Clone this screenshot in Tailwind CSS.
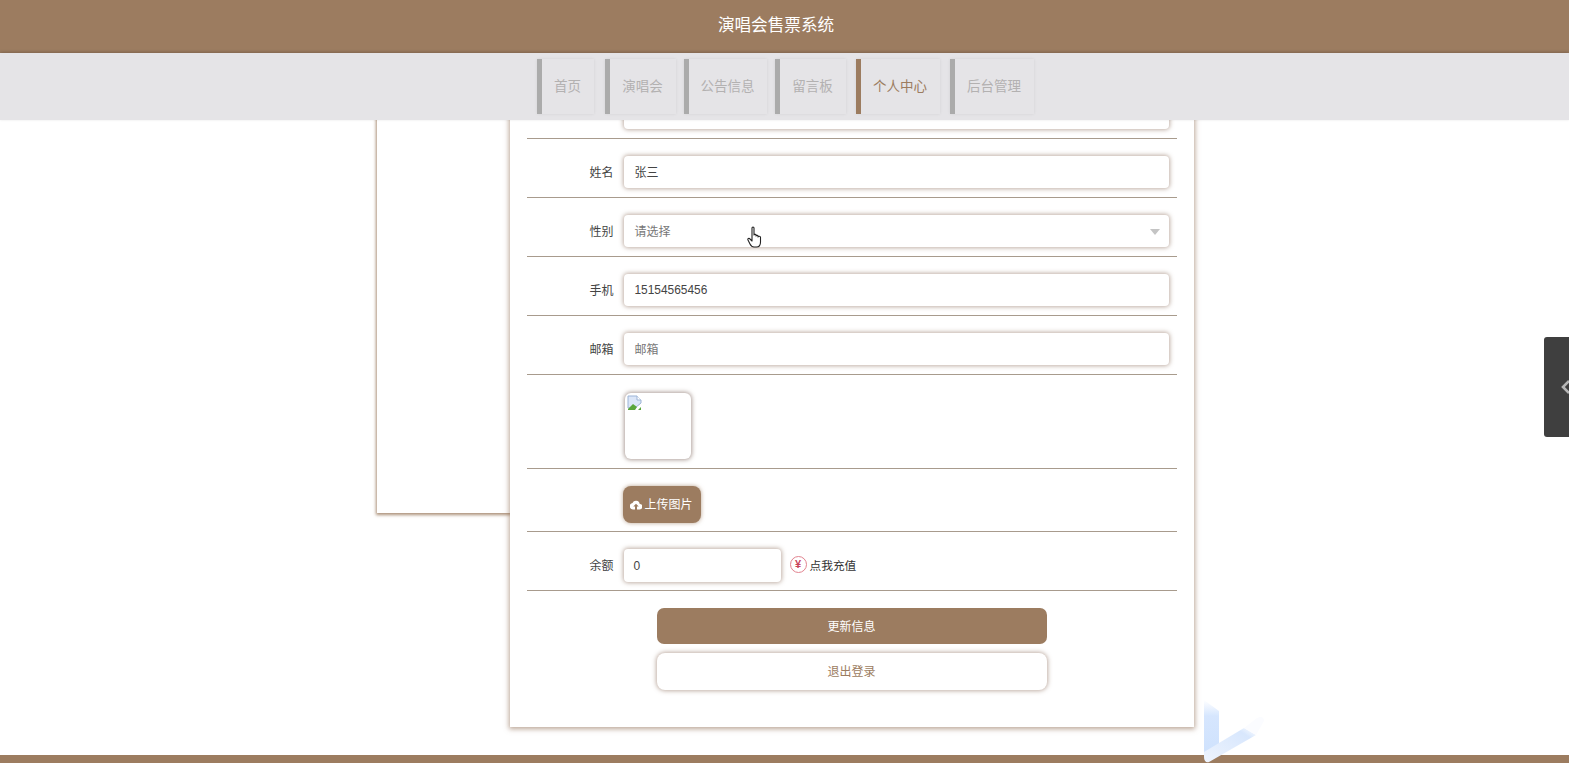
<!DOCTYPE html>
<html lang="zh">
<head>
<meta charset="utf-8">
<script src="https://cdn.jsdelivr.net/npm/@tailwindcss/browser@4"></script>
<title>演唱会售票系统</title>
</head>
<body class="m-0 bg-white">
<div class="relative flex h-[763px] w-full flex-col overflow-hidden bg-white font-['Liberation_Sans','Noto_Sans_CJK_SC',sans-serif] text-xs text-[#444]">
  <header class="z-20 flex h-[53px] shrink-0 items-center justify-center bg-[#9c7c60] pr-[17px] text-[16.6px] text-white">演唱会售票系统</header>
  <nav class="z-20 flex h-[67px] shrink-0 items-start justify-center bg-[#e5e4e7] pl-[1px] pt-[6px] text-[13.5px] text-[#b3b1b1] shadow-[0_-1px_3px_rgba(0,0,0,0.2)]">
    <a class="flex h-[55px] w-[57px] items-center justify-center border-l-[5px] border-[#ababab] shadow-[0_0_3px_rgba(0,0,0,0.08)]">首页</a>
    <a class="ml-[11px] flex h-[55px] w-[71px] items-center justify-center border-l-[5px] border-[#ababab] shadow-[0_0_3px_rgba(0,0,0,0.08)]">演唱会</a>
    <a class="ml-[8px] flex h-[55px] w-[83px] items-center justify-center border-l-[5px] border-[#ababab] shadow-[0_0_3px_rgba(0,0,0,0.08)]">公告信息</a>
    <a class="ml-[8px] flex h-[55px] w-[71px] items-center justify-center border-l-[5px] border-[#ababab] shadow-[0_0_3px_rgba(0,0,0,0.08)]">留言板</a>
    <a class="ml-[10px] flex h-[55px] w-[84px] items-center justify-center border-l-[5px] border-[#9c7c60] text-[#9c7c60] shadow-[0_0_3px_rgba(0,0,0,0.08)]">个人中心</a>
    <a class="ml-[10px] flex h-[55px] w-[84px] items-center justify-center border-l-[5px] border-[#ababab] shadow-[0_0_3px_rgba(0,0,0,0.08)]">后台管理</a>
  </nav>

  <main class="min-h-0 flex-1 overflow-hidden">
    <div class="mx-auto -mt-[40px] flex w-[816px] items-start">
      <aside class="h-[433px] w-[134px] shrink-0 bg-white shadow-[0_1px_3px_1px_rgba(156,124,96,0.85)]"></aside>
      <section class="relative z-10 -ml-[1px] w-[684px] shrink-0 bg-white px-[17px] pb-[37px] shadow-[0_1px_5px_1px_rgba(140,105,80,0.6)]">
        <div class="flex h-[59px] items-start border-b border-[#a89b8d] pl-[97px] pt-[16px]">
          <div class="h-[33px] w-[545px] rounded-[4px] bg-white shadow-[0_0_4px_1px_rgba(130,95,75,0.5)]"></div>
        </div>
        <div class="flex h-[59px] items-start border-b border-[#a89b8d] pt-[17px]">
          <label class="w-[87px] shrink-0 pt-[1px] text-right leading-[33px]">姓名</label>
          <div class="ml-[10px] flex h-[32px] w-[545px] items-center rounded-[4px] bg-white pl-[11px] pt-[1px] shadow-[0_0_4px_1px_rgba(130,95,75,0.5)]">张三</div>
        </div>
        <div class="flex h-[59px] items-start border-b border-[#a89b8d] pt-[17px]">
          <label class="w-[87px] shrink-0 pt-[1px] text-right leading-[33px]">性别</label>
          <div class="ml-[10px] flex h-[32px] w-[545px] items-center justify-between rounded-[4px] bg-white pl-[11px] pr-[9px] pt-[1px] text-[#777] shadow-[0_0_4px_1px_rgba(130,95,75,0.5)]">
            <span>请选择</span>
            <span class="h-0 w-0 border-x-[5.5px] border-t-[6px] border-x-transparent border-t-[#c4c4c4]"></span>
          </div>
        </div>
        <div class="flex h-[59px] items-start border-b border-[#a89b8d] pt-[17px]">
          <label class="w-[87px] shrink-0 pt-[1px] text-right leading-[33px]">手机</label>
          <div class="ml-[10px] flex h-[32px] w-[545px] items-center rounded-[4px] bg-white pl-[11px] pt-[2px] text-[11.9px] shadow-[0_0_4px_1px_rgba(130,95,75,0.5)]">15154565456</div>
        </div>
        <div class="flex h-[59px] items-start border-b border-[#a89b8d] pt-[17px]">
          <label class="w-[87px] shrink-0 pt-[1px] text-right leading-[33px]">邮箱</label>
          <div class="ml-[10px] flex h-[32px] w-[545px] items-center rounded-[4px] bg-white pl-[11px] pt-[1px] text-[#777] shadow-[0_0_4px_1px_rgba(130,95,75,0.5)]">邮箱</div>
        </div>
        <div class="flex h-[94px] items-start border-b border-[#a89b8d] pl-[98px] pt-[18px]">
          <div class="h-[66px] w-[66px] rounded-[6px] bg-white p-[2px] shadow-[0_0_4px_1px_rgba(120,95,85,0.6)]">
            <svg width="16" height="16" viewBox="0 0 16 16" aria-hidden="true">
              <path d="M1 1h9l4 4v3L8 13H1z" fill="#dbe6f8" stroke="#9db4d6" stroke-width="1"/>
              <path d="M10 1v4h4" fill="#fff" stroke="#9db4d6" stroke-width="1"/>
              <path d="M1 14l5-5 4 3-2 3H1z" fill="#5aa63c"/>
              <path d="M11 15l3-3v3z" fill="#5aa63c"/>
            </svg>
          </div>
        </div>
        <div class="flex h-[63px] items-start border-b border-[#a89b8d] pl-[96px] pt-[17px]">
          <button class="flex h-[37px] w-[78px] items-center justify-center gap-[2px] rounded-[8px] bg-[#9c7c60] text-white shadow-[0_0_4px_rgba(156,124,96,0.7)]">
            <svg width="12" height="10" viewBox="0 0 24 20" fill="#fff" aria-hidden="true"><path d="M19.400 8A7.500 7.500 0 0 0 5 6.100 6.500 6.500 0 0 0 6 19h4v-6H6.500L12 7.500l5.500 5.500H14v6h5a5.500 5.500 0 0 0 .4-11z"/></svg>
            <span>上传图片</span>
          </button>
        </div>
        <div class="flex h-[59px] items-start border-b border-[#a89b8d] pt-[17px]">
          <label class="w-[87px] shrink-0 pt-[1px] text-right leading-[33px]">余额</label>
          <div class="ml-[10px] flex h-[33px] w-[157px] items-center rounded-[4px] bg-white pl-[10px] shadow-[0_0_4px_1px_rgba(130,95,75,0.5)]">0</div>
          <div class="ml-[9px] flex h-[33px] items-center gap-[3px] text-[11.7px] text-[#333]">
            <span class="-mt-[3px] flex h-[17px] w-[17px] items-center justify-center rounded-full border border-[#e2838f] text-[11px] font-bold leading-none text-[#c9455a]">¥</span>
            <span class="mt-[1px]">点我充值</span>
          </div>
        </div>
        <div class="flex flex-col items-center pt-[17px]">
          <button class="h-[36px] w-[390px] rounded-[7px] bg-[#9c7c60] pt-[1px] text-white">更新信息</button>
          <button class="mt-[9px] h-[37px] w-[390px] rounded-[8px] bg-white text-[#9c7c60] shadow-[0_0_4px_1px_rgba(130,95,75,0.5)]">退出登录</button>
        </div>
      </section>
    </div>
  </main>

  <footer class="h-[8px] shrink-0 bg-[#9c7c60]"></footer>

  <!-- side tab -->
  <div class="absolute right-0 top-[337px] z-30 flex h-[100px] w-[25px] items-center justify-end overflow-hidden rounded-l-[3px] bg-[#3f3f3f]">
    <svg width="8" height="18" viewBox="0 0 8 18" fill="none" aria-hidden="true"><path d="M8 3 2 9l6 6" stroke="#b5b5b5" stroke-width="2.6"/></svg>
  </div>

  <!-- watermark -->
  <svg class="absolute left-[1203px] top-[697px] z-30" width="63" height="66" viewBox="0 0 63 66" fill="none" aria-hidden="true">
    <defs>
      <linearGradient id="a" x1="0" y1="0" x2="0" y2="1"><stop offset="0" stop-color="#fff"/><stop offset="0.3" stop-color="#d6e6fe"/><stop offset="1" stop-color="#cfe2fd"/></linearGradient>
      <linearGradient id="b" x1="0" y1="1" x2="1" y2="0"><stop offset="0" stop-color="#eef4fe"/><stop offset="0.55" stop-color="#dfebfd"/><stop offset="0.8" stop-color="#d8e7fd"/><stop offset="1" stop-color="#fff"/></linearGradient>
    </defs>
    <path d="M1 3 16 14v34L1 56z" fill="url(#a)"/>
    <path d="M1 55 16 46l25-15 12 7-47 27c-3 1-5-1-5-5z" fill="url(#b)"/>
    <path d="M41 31 54 21c4-2 7-1 7 3l-8 14z" fill="#fbfcff"/>
  </svg>

  <!-- pointer -->
  <svg class="absolute left-[747px] top-[226px] z-30" width="16" height="22" viewBox="0 0 16 22" aria-hidden="true">
    <path d="M5 2c0-1.300 2-1.300 2 0v7c0-1 2-1 2 0v1c0-1 2-1 2 0v1c0-1 2.500-1 2.500.3V16c0 3-1.500 5-4 5H7c-2 0-3-1-4-3l-2-4c-.6-1.300 1-2.300 2-1l2 2z" fill="#fff" stroke="#222" stroke-width="1.100" stroke-linejoin="round"/>
  </svg>
</div>
</body>
</html>
